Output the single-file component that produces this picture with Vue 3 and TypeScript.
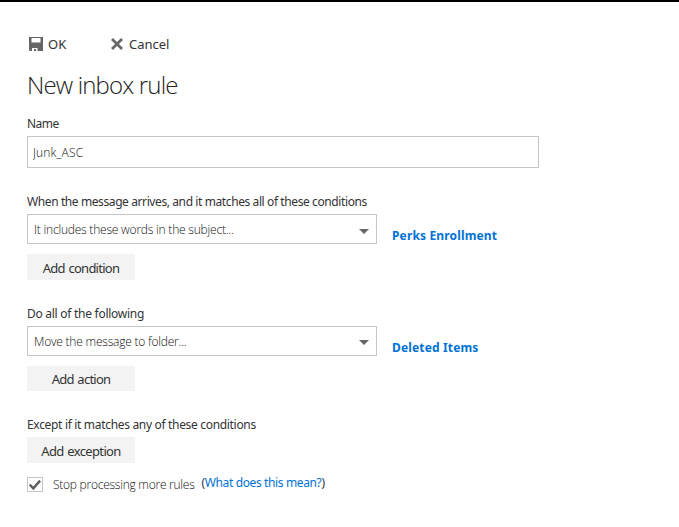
<script setup lang="ts">
import { ref } from 'vue'

interface RuleSection {
  key: string
  label: string
  selected: string
  value: string
  button: string
}

const name = ref('Junk_ASC')
const stopProcessing = ref(true)

const sections: RuleSection[] = [
  {
    key: 'condition',
    label: 'When the message arrives, and it matches all of these conditions',
    selected: 'It includes these words in the subject...',
    value: 'Perks Enrollment',
    button: 'Add condition',
  },
  {
    key: 'action',
    label: 'Do all of the following',
    selected: 'Move the message to folder...',
    value: 'Deleted Items',
    button: 'Add action',
  },
]
</script>

<template>
  <main class="page">
    <div class="toolbar">
      <button class="command ok" type="button">
        <svg class="save-icon" width="14" height="14" viewBox="0 0 14 14">
          <path fill="#666" fill-rule="evenodd" d="M0 0H14V14H1L0 13ZM2.5 1V5.5H11.5V1ZM3 11V14H5V12H7V14H8.5V11Z" />
        </svg>
        <span>OK</span>
      </button>
      <button class="command cancel" type="button">
        <svg class="close-icon" width="12" height="12" viewBox="0 0 12 12">
          <path fill="none" stroke="#666" stroke-width="2.8" d="M1 1L11 11M11 1L1 11" />
        </svg>
        <span>Cancel</span>
      </button>
    </div>

    <h1 class="title">New inbox rule</h1>

    <label class="label name-label" for="rule-name">Name</label>
    <input id="rule-name" v-model="name" class="name-input" type="text" />

    <section v-for="s in sections" :key="s.key" class="section" :class="s.key">
      <div class="label"><span>{{ s.label }}</span></div>
      <div class="row">
        <div class="select" role="combobox">
          <span class="selected">{{ s.selected }}</span>
          <svg width="10" height="5" viewBox="0 0 10 5"><path fill="#666" d="M0 0H10L5 5Z" /></svg>
        </div>
        <a class="value">{{ s.value }}</a>
      </div>
      <button class="add" type="button"><span>{{ s.button }}</span></button>
    </section>

    <section class="section exception">
      <div class="label"><span>Except if it matches any of these conditions</span></div>
      <button class="add" type="button"><span>Add exception</span></button>
    </section>

    <div class="stop">
      <button class="check" type="button" role="checkbox" :aria-checked="stopProcessing" @click="stopProcessing = !stopProcessing">
        <svg v-if="stopProcessing" width="14" height="13" viewBox="0 0 14 13">
          <path fill="none" stroke="#606060" stroke-width="2.4" d="M1.7 6.7L5.3 10.4L12.1 2.6" />
        </svg>
      </button>
      <span class="stop-text">Stop processing more rules</span>
      <span class="help">(<a>What does this mean?</a>)</span>
    </div>
  </main>
</template>

<style>
body {
  background: #fff;
}
</style>

<style scoped>
.page {
  box-sizing: border-box;
  width: 679px;
  height: 527px;
  padding: 34px 0 0 27px;
  border-top: 2px solid #000;
  background: #fff;
  color: #333;
  font: 12px/16px "Noto Sans", "Open Sans", sans-serif;
  overflow: hidden;
}
button {
  padding: 0;
  border: 0;
  background: none;
  color: inherit;
  font: inherit;
}
.toolbar {
  display: flex;
  height: 16px;
}
.command {
  display: flex;
  align-items: center;
  font-size: 13px;
}
.ok {
  width: 82px;
  padding-left: 2px;
  gap: 5px;
}
.cancel {
  padding-left: 2px;
  gap: 6px;
}
.title {
  height: 32px;
  margin: 17px 0 0;
  color: #222;
  font: 300 24px/32px "Open Sans", "Noto Sans", sans-serif;
  letter-spacing: -0.84px;
}
.label {
  display: block;
  height: 16px;
  letter-spacing: -0.4px;
}
.name-label {
  margin-top: 15px;
  letter-spacing: -0.5px;
}
.action .label {
  letter-spacing: -0.27px;
}
.exception .label {
  letter-spacing: -0.32px;
}
.name-input {
  box-sizing: border-box;
  display: block;
  width: 512px;
  height: 32px;
  margin-top: 4px;
  padding: 1px 5px 0;
  border: 1px solid #c6c6c6;
  outline: 0;
  color: #111;
  font: 300 12px "Open Sans", "Noto Sans", sans-serif;
  letter-spacing: 0.15px;
}
.section {
  height: 112px;
}
.section.condition {
  margin-top: 26px;
}
.row {
  display: flex;
  height: 30px;
  margin: 4px 0 10px;
}
.select {
  box-sizing: border-box;
  display: flex;
  align-items: center;
  justify-content: space-between;
  width: 350px;
  padding: 0 7px 0 6px;
  border: 1px solid #c6c6c6;
}
.select svg {
  margin-top: 4px;
}
.action .select svg {
  margin-top: 2px;
}
.selected {
  padding-top: 2px;
  color: #111;
  font-family: "Open Sans", "Noto Sans", sans-serif;
  font-weight: 300;
  letter-spacing: -0.21px;
}
.value {
  padding: 14px 0 0 15px;
  color: #0072d6;
  font-weight: 700;
  letter-spacing: 0.15px;
}
.add {
  display: block;
  width: 108px;
  height: 26px;
  padding-top: 2px;
  background: #f3f3f3;
  font-size: 13px;
  line-height: 24px;
  letter-spacing: -0.75px;
  word-spacing: 1px;
}
.action .add {
  height: 25px;
  padding-top: 1px;
}
.exception {
  height: 59px;
  margin-top: -1px;
}
.exception .add {
  margin-top: 4px;
  padding-top: 1px;
  letter-spacing: -0.65px;
}
.stop {
  display: flex;
  height: 16px;
  margin-top: 1px;
}
.check {
  box-sizing: border-box;
  width: 16px;
  height: 15px;
  border: 1px solid #c6c6c6;
}
.check svg {
  display: block;
}
.stop-text {
  margin-left: 10px;
  color: #111;
  font-family: "Open Sans", "Noto Sans", sans-serif;
  font-weight: 300;
  letter-spacing: -0.25px;
}
.help {
  margin: -2px 0 0 7px;
  letter-spacing: -0.37px;
}
.help a {
  color: #0072d6;
}
</style>
